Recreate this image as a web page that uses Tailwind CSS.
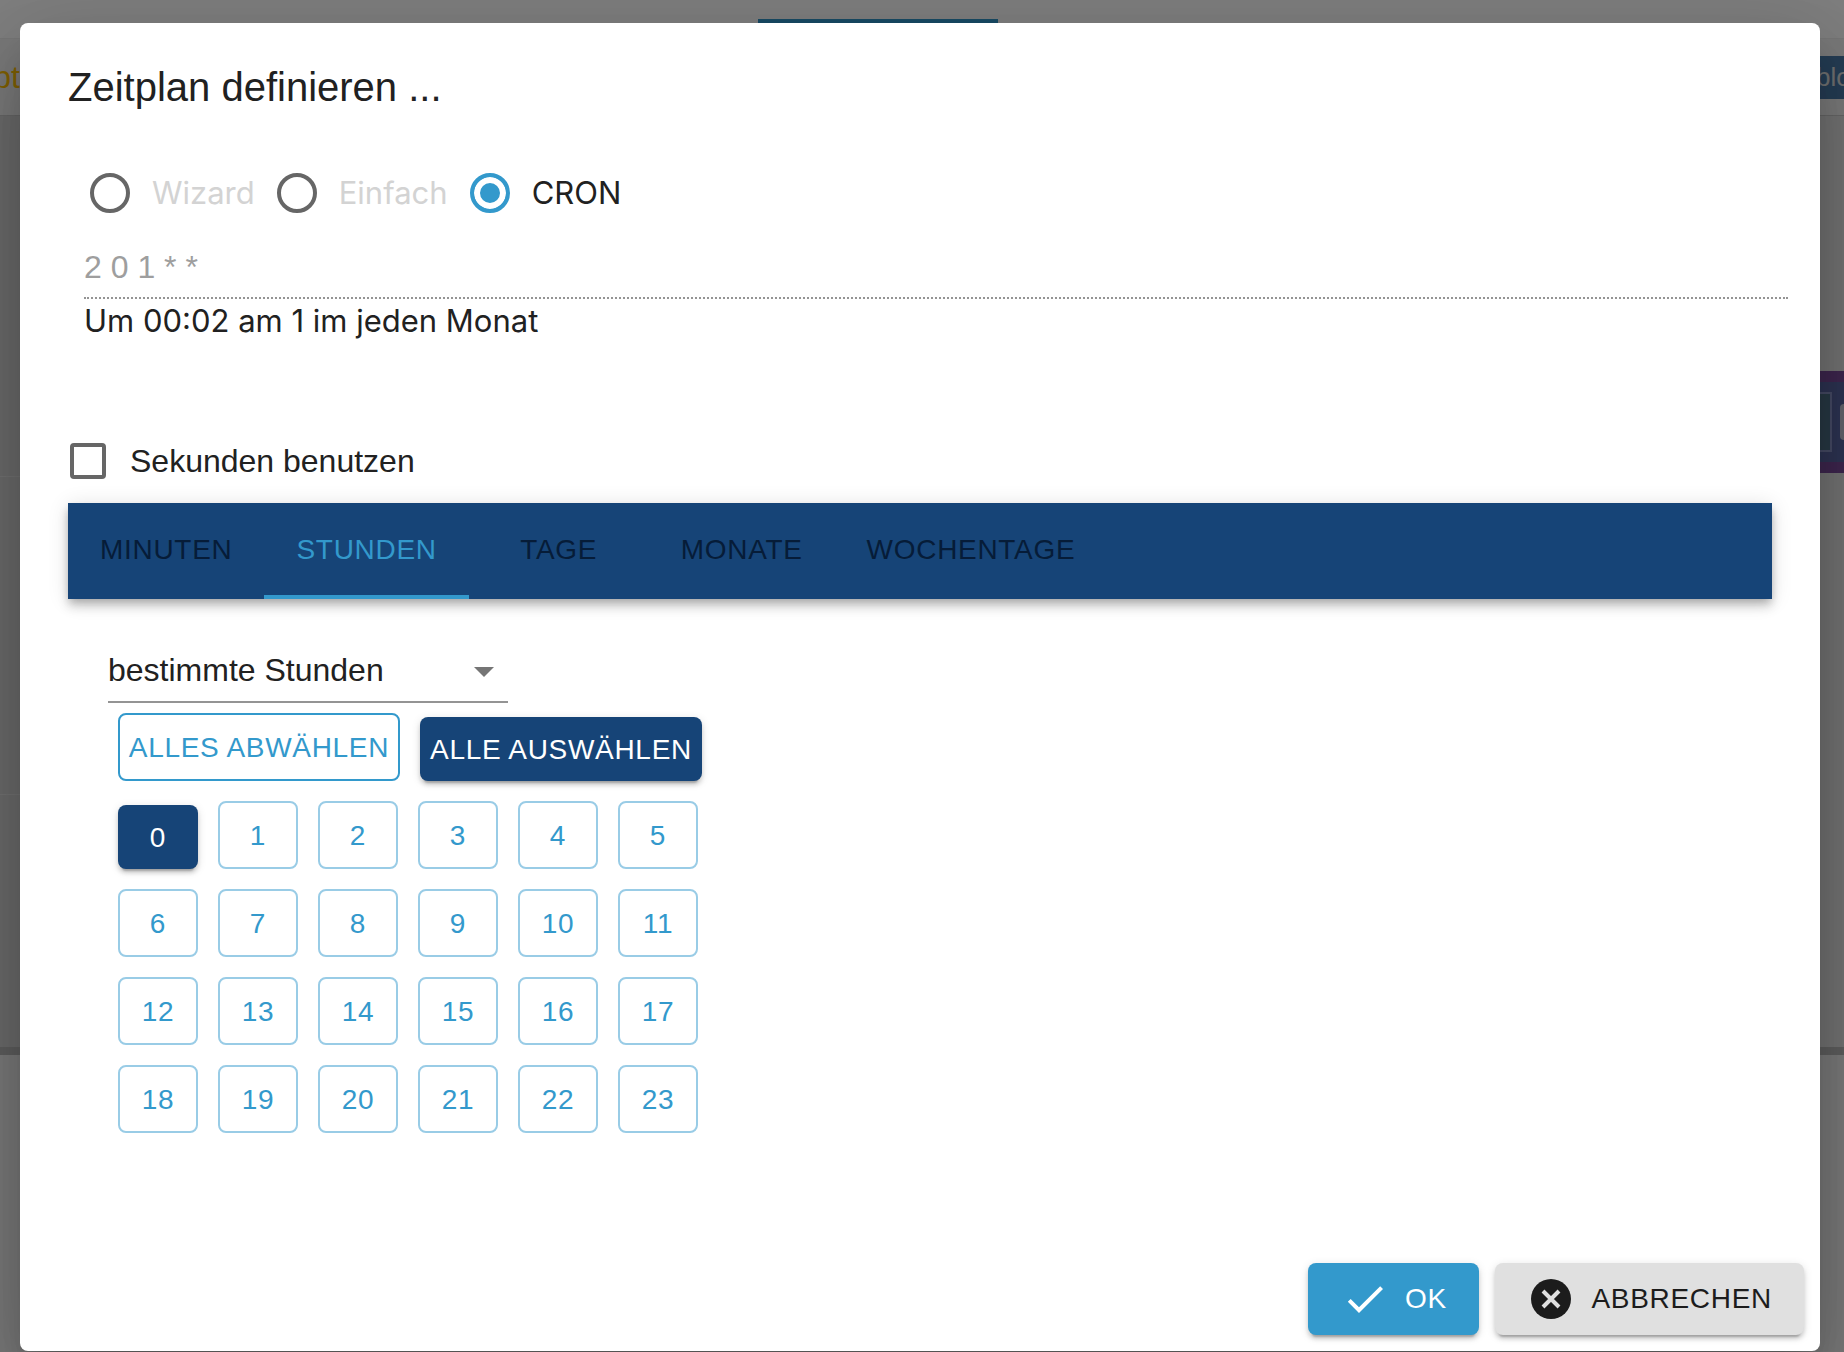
<!doctype html>
<html lang="de">

<head>
    <meta charset="UTF-8">
    <meta name="viewport" content="width=device-width, initial-scale=1.0">
    <title>Zeitplan definieren</title>
    <script src="https://cdn.jsdelivr.net/npm/@tailwindcss/browser@4"></script>
</head>

<body class="relative h-screen overflow-hidden bg-white font-['Liberation_Sans',Arial,sans-serif] text-[#212121]">

    <!-- Editor behind the dialog -->
    <div class="flex flex-col h-full" aria-hidden="true">
        <div class="h-[23px] shrink-0 flex justify-center pr-22 items-end">
            <div class="w-60 h-1 bg-[#3399cc]"></div>
        </div>
        <div class="h-4 shrink-0 bg-white border-b border-[#eeeeee]"></div>
        <div class="h-[77px] shrink-0 flex items-center justify-between overflow-hidden border-b border-[#cccccc] bg-[#f5f5f5]">
            <div class="w-5 flex justify-end text-[32px] text-[#ffc107]">Skript</div>
            <div class="w-9 h-[43px] pl-2 flex items-center bg-[#4a7aa8] text-[26px] text-[#e0e0e0] overflow-hidden">
                <span class="shrink-0">blo</span>
            </div>
        </div>
        <div class="grow flex justify-between border-b-8 border-[#bdbdbd]">
            <div class="w-1/2 bg-[#d6d6d6]">
                <div class="h-[361px] border-b border-[#e4e4e4]"></div>
                <div class="h-[318px] border-b border-[#e4e4e4]"></div>
            </div>
            <div class="w-1/2 bg-[#e6e6e6] pt-[255px]">
                <div class="h-[102px] bg-[#5b67a5] border-y-[11px] border-[#7d4c9c] flex justify-end items-center overflow-hidden">
                    <div class="w-20 h-[60px] border-2 border-[#8b94c8] bg-[#4f7089]"></div>
                    <div class="w-1 h-9 ml-2 rounded-l-lg bg-[#c8c8d8]"></div>
                </div>
            </div>
        </div>
        <div class="h-[297px] shrink-0 bg-[#f5f5f5]"></div>
    </div>

    <!-- Dialog -->
    <div class="absolute inset-0 bg-black/50 px-5 pt-[23px] pb-px flex sm:pr-6">
        <div role="dialog" aria-labelledby="title"
            class="grow flex flex-col rounded-lg bg-white shadow-[0_22px_30px_-14px_rgba(0,0,0,0.2),0_48px_76px_6px_rgba(0,0,0,0.14),0_18px_92px_16px_rgba(0,0,0,0.12)]">
            <h2 id="title" class="px-12 pt-8 text-[40px] leading-16">Zeitplan definieren ...</h2>

            <div class="grow px-12 pt-[50px]">
                <div class="ml-4 h-12 pl-1.5 flex items-center gap-[22px] font-[Inter,sans-serif] text-[31px]">
                    <label class="flex items-center gap-[22px] text-[#d3d3d3]">
                        <input type="radio" name="mode"
                            class="appearance-none size-10 rounded-full border-4 border-[#666666]">Wizard
                    </label>
                    <label class="flex items-center gap-[22px] text-[#d3d3d3]">
                        <input type="radio" name="mode"
                            class="appearance-none size-10 rounded-full border-4 border-[#666666]">Einfach
                    </label>
                    <label class="flex items-center gap-[22px]">
                        <input type="radio" name="mode" checked
                            class="appearance-none size-10 rounded-full border-4 border-[#3399cc] bg-[#3399cc] shadow-[inset_0_0_0_6px_#ffffff]">CRON
                    </label>
                </div>

                <div class="ml-4 -mr-4 pt-6">
                    <input type="text" value="2 0 1 * *" aria-label="CRON" disabled
                        class="block w-full h-[58px] pb-1 border-b-2 border-dotted border-[#949494] text-[32px] text-[#9e9e9e]">
                    <p class="font-[Inter,sans-serif] text-[31px] leading-11">Um 00:02 am 1 im jeden Monat</p>
                </div>

                <label class="mt-[90px] h-14 flex items-center gap-6 pl-0.5 text-[32px]">
                    <input type="checkbox" class="appearance-none size-9 rounded border-4 border-[#666666]">Sekunden benutzen
                </label>

                <div role="tablist"
                    class="mt-3.5 h-24 flex bg-[#164477] text-[28px] tracking-wide text-[#061c38] shadow-[0_4px_8px_-2px_rgba(0,0,0,0.2),0_8px_10px_rgba(0,0,0,0.14),0_2px_20px_rgba(0,0,0,0.12)]">
                    <button role="tab" class="min-w-[180px] px-8 pt-0.5 border-b-4 border-transparent">MINUTEN</button>
                    <button role="tab" aria-selected="true"
                        class="min-w-[180px] px-8 pt-0.5 border-b-4 border-[#3399cc] text-[#3399cc]">STUNDEN</button>
                    <button role="tab" class="min-w-[180px] px-8 pt-0.5 border-b-4 border-transparent">TAGE</button>
                    <button role="tab" class="min-w-[180px] px-8 pt-0.5 border-b-4 border-transparent">MONATE</button>
                    <button role="tab" class="min-w-[180px] px-8 pt-0.5 border-b-4 border-transparent">WOCHENTAGE</button>
                </div>

                <div class="pl-10 pt-10">
                    <div class="relative w-[400px]">
                        <select aria-label="Stunden"
                            class="block w-full h-16 appearance-none border-b-2 border-[#949494] text-[32px]">
                            <option>bestimmte Stunden</option>
                            <option>jede Stunde</option>
                        </select>
                        <svg class="absolute right-0 top-2 size-12 pointer-events-none" viewBox="0 0 24 24" fill="#757575">
                            <path d="M7 10l5 5 5-5z" />
                        </svg>
                    </div>

                    <div class="pl-2.5 pt-2.5 flex items-end gap-5 text-[28px] tracking-wide">
                        <button class="h-[68px] min-w-[282px] px-2 pt-0.5 rounded-lg border-2 border-[#3399cc] text-[#3399cc]">ALLES ABWÄHLEN</button>
                        <button
                            class="h-16 min-w-[282px] px-2 pt-0.5 rounded-lg bg-[#164477] text-white shadow-[0_6px_2px_-4px_rgba(0,0,0,0.2),0_4px_4px_rgba(0,0,0,0.14),0_2px_10px_rgba(0,0,0,0.12)]">ALLE AUSWÄHLEN</button>
                    </div>

                    <div id="hours" class="w-[590px] pl-2.5 pt-5 grid grid-cols-6 gap-5 items-end text-[28px] tracking-wide"></div>
                </div>
            </div>

            <div class="p-4 flex justify-end gap-4 text-[28px] tracking-wide">
                <button
                    class="h-[72px] min-w-[171px] px-8 flex items-center justify-center gap-4 rounded-lg bg-[#3399cc] text-white shadow-[0_6px_2px_-4px_rgba(0,0,0,0.2),0_4px_4px_rgba(0,0,0,0.14),0_2px_10px_rgba(0,0,0,0.12)]">
                    <svg class="size-12" viewBox="0 0 24 24" fill="currentColor">
                        <path d="M9 16.17L4.83 12l-1.42 1.41L9 19 21 7l-1.41-1.41z" />
                    </svg>OK
                </button>
                <button
                    class="h-[72px] px-8 flex items-center gap-4 rounded-lg bg-[#e0e0e0] text-[#1c1c1c] shadow-[0_6px_2px_-4px_rgba(0,0,0,0.2),0_4px_4px_rgba(0,0,0,0.14),0_2px_10px_rgba(0,0,0,0.12)]">
                    <svg class="size-12" viewBox="0 0 24 24">
                        <circle cx="12" cy="12" r="10" fill="currentColor" />
                        <path d="M8 8l8 8M16 8l-8 8" stroke="#e0e0e0" stroke-width="2" />
                    </svg>ABBRECHEN
                </button>
            </div>
        </div>
    </div>

    <script>
        const hours = document.getElementById('hours');
        const selected = [0];
        for (let h = 0; h < 24; h++) {
            const button = document.createElement('button');
            button.textContent = h;
            button.className = selected.includes(h)
                ? 'h-16 pt-0.5 rounded-lg bg-[#164477] text-white shadow-[0_6px_2px_-4px_rgba(0,0,0,0.2),0_4px_4px_rgba(0,0,0,0.14),0_2px_10px_rgba(0,0,0,0.12)]'
                : 'h-[68px] pt-0.5 rounded-lg border-2 border-[#99cce6] text-[#3399cc]';
            hours.appendChild(button);
        }
    </script>

</body>

</html>
